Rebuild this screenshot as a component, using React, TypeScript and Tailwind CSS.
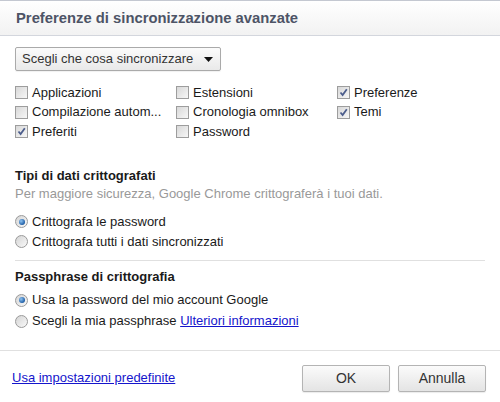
import React from "react";

const font = { fontFamily: '"Liberation Sans", Arial, sans-serif' };

function Checkbox({ checked }: { checked?: boolean }) {
  return (
    <span className="relative inline-block w-[13px] h-[13px] border border-[#9d9d9d] bg-gradient-to-br from-[#d8d8d8] to-[#f7f7f7] shrink-0">
      {checked && (
        <svg className="absolute left-[1px] top-[1px]" width="9" height="9" viewBox="0 0 9 9">
          <path d="M1.5 4.5 L3.6 7 L7.8 1.2" fill="none" stroke="#4c5d8c" strokeWidth="1.8" />
        </svg>
      )}
    </span>
  );
}

function Radio({ checked }: { checked?: boolean }) {
  return (
    <span className="relative inline-block w-[13px] h-[13px] rounded-full border border-[#9a9a9a] bg-gradient-to-br from-[#d4d4d4] to-[#fafafa] shrink-0">
      {checked && (
        <span className="absolute left-[2.5px] top-[2.5px] w-[6px] h-[6px] rounded-full bg-[radial-gradient(circle_at_35%_35%,#8fc3f0,#1f5fa8_70%,#17406f)]" />
      )}
    </span>
  );
}

function CheckItem({ label, checked }: { label: string; checked?: boolean }) {
  return (
    <div className="flex items-center h-[19.5px] gap-[4px]">
      <Checkbox checked={checked} />
      <span className="text-[13px] leading-[16px] text-[#1a1a1a] whitespace-nowrap">{label}</span>
    </div>
  );
}

function RadioItem({ label, checked, children, h }: { label: string; checked?: boolean; children?: React.ReactNode; h: string }) {
  return (
    <div className={`flex items-center gap-[4px] ${h}`}>
      <Radio checked={checked} />
      <span className="text-[13px] leading-[16px] text-[#1a1a1a] whitespace-nowrap">
        {label}
        {children}
      </span>
    </div>
  );
}

function Button({ children }: { children: React.ReactNode }) {
  return (
    <button className="w-[88px] h-[27px] rounded-[2px] border border-[#b4b4b4] bg-gradient-to-b from-[#fbfbfb] to-[#e4e4e4] text-[14px] text-[#333] shadow-[0_1px_1px_rgba(0,0,0,0.08)]">
      {children}
    </button>
  );
}

export default function App() {
  return (
    <div className="w-[500px] h-[402px] bg-white overflow-hidden" style={font}>
      <div className="h-[36px] border-t border-b border-t-[#c4c8d1] border-b-[#d3d6dd] bg-gradient-to-b from-white to-[#f2f2f2] flex items-center pl-[16px]">
        <span className="text-[14.8px] font-bold text-[#4d5466]">Preferenze di sincronizzazione avanzate</span>
      </div>
      <div className="px-[15px]">
        <div className="mt-[11px] w-[206px] h-[24px] rounded-[2px] border border-[#aaaaaa] bg-gradient-to-b from-[#fbfbfb] to-[#e9e9e9] flex items-center pl-[6px] pr-[7px] shadow-[0_1px_1px_rgba(0,0,0,0.06)]">
          <span className="text-[13px] text-[#333] flex-1">Scegli che cosa sincronizzare</span>
          <svg width="9" height="5" viewBox="0 0 9 5">
            <path d="M0 0 H9 L4.5 5 Z" fill="#111" />
          </svg>
        </div>
        <div className="mt-[12px] grid grid-cols-[161px_161px_1fr]">
          <div>
            <CheckItem label="Applicazioni" />
            <CheckItem label="Compilazione autom..." />
            <CheckItem label="Preferiti" checked />
          </div>
          <div>
            <CheckItem label="Estensioni" />
            <CheckItem label="Cronologia omnibox" />
            <CheckItem label="Password" />
          </div>
          <div>
            <CheckItem label="Preferenze" checked />
            <CheckItem label="Temi" checked />
          </div>
        </div>
        <div className="mt-[26px] text-[13px] leading-[16px] font-bold text-[#1a1a1a]">Tipi di dati crittografati</div>
        <div className="mt-[2px] text-[13px] leading-[16px] text-[#999]">Per maggiore sicurezza, Google Chrome crittograferà i tuoi dati.</div>
        <div className="mt-[10px]">
          <RadioItem h="h-[20px]" label="Crittografa le password" checked />
          <RadioItem h="h-[20px]" label="Crittografa tutti i dati sincronizzati" />
        </div>
        <div className="mt-[8px] border-t border-[#e0e0e0]" />
        <div className="mt-[8px] text-[13px] leading-[16px] font-bold text-[#1a1a1a]">Passphrase di crittografia</div>
        <div className="mt-[5px]">
          <RadioItem h="h-[21px]" label="Usa la password del mio account Google" checked />
          <RadioItem h="h-[21px]" label="Scegli la mia passphrase ">
            <a className="text-[#1515cc] underline cursor-pointer">Ulteriori informazioni</a>
          </RadioItem>
        </div>
      </div>
      <div className="mt-[18px] border-t border-[#e0e0e0] flex items-center justify-between pl-[12px] pr-[14px] pt-[14px]">
        <a className="text-[13px] text-[#1515cc] underline cursor-pointer">Usa impostazioni predefinite</a>
        <div className="flex gap-[8px]">
          <Button>OK</Button>
          <Button>Annulla</Button>
        </div>
      </div>
    </div>
  );
}
